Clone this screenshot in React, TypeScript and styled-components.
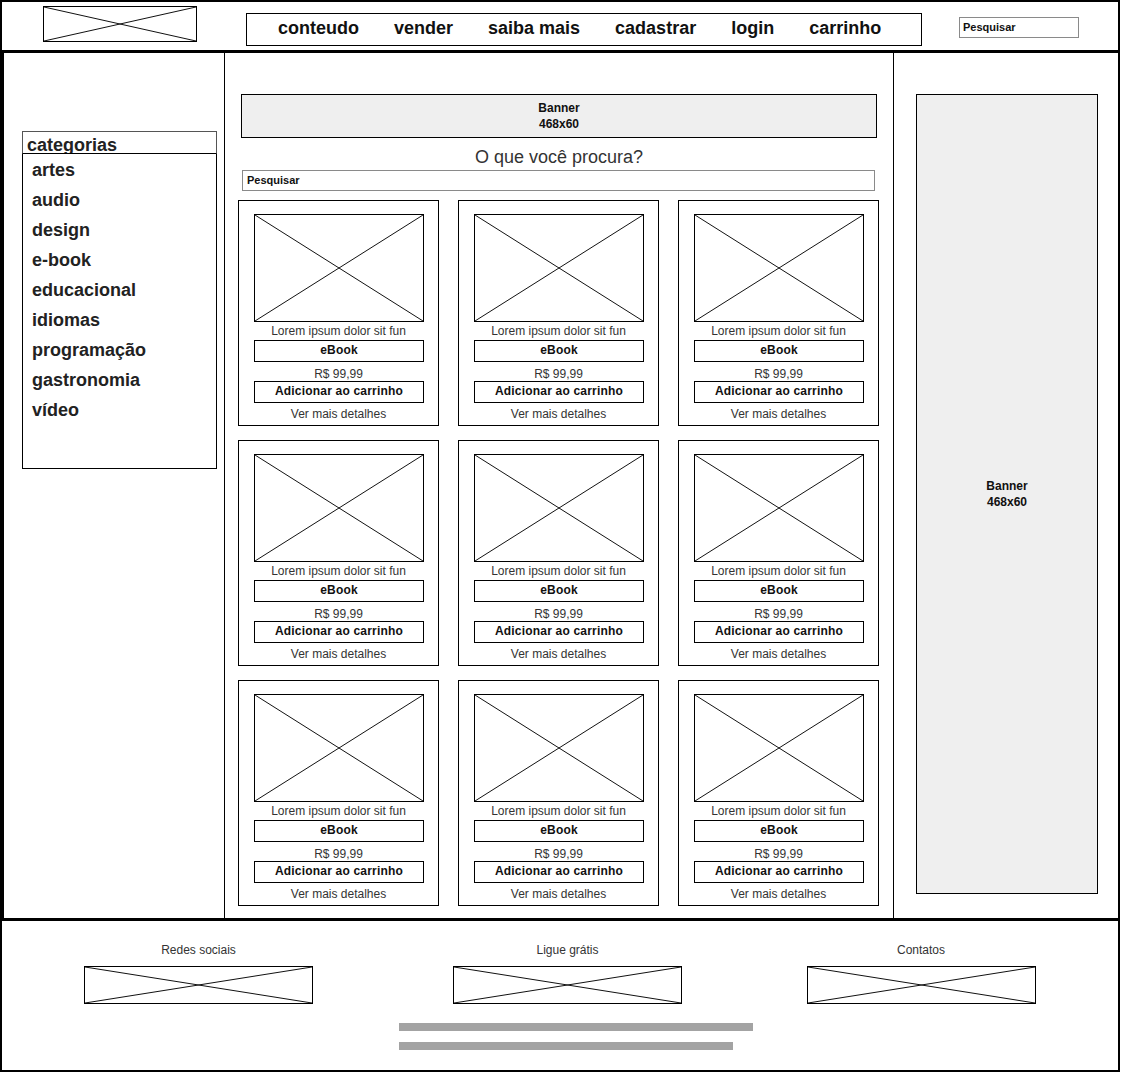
import React from 'react';
import styled, { createGlobalStyle } from 'styled-components';

const GlobalStyle = createGlobalStyle`
  html, body {
    margin: 0;
    padding: 0;
    background: #fff;
  }
  body {
    font-family: "Liberation Sans", Arial, sans-serif;
    color: #222;
  }
  * {
    box-sizing: border-box;
  }
`;

const navItems = ['conteudo', 'vender', 'saiba mais', 'cadastrar', 'login', 'carrinho'];
const categories = ['artes', 'audio', 'design', 'e-book', 'educacional', 'idiomas', 'programação', 'gastronomia', 'vídeo'];
const footerCols = ['Redes sociais', 'Ligue grátis', 'Contatos'];

const Frame = styled.div`
  width: 1120px;
  height: 1072px;
  border: 2px solid #000;
  display: flex;
  flex-direction: column;
`;

/* header */
const Header = styled.header`
  height: 51px;
  border-bottom: 3px solid #000;
  display: flex;
  align-items: flex-start;
  padding-left: 41px;
`;

const Placeholder = styled.div<{ $w: number; $h: number }>`
  width: ${(p) => p.$w}px;
  height: ${(p) => p.$h}px;
  border: 1px solid #000;
  background: #fff;
  flex: none;

  svg {
    display: block;
    width: 100%;
    height: 100%;
  }
`;

const LogoSlot = styled.div`
  margin-top: 4px;
`;

const Nav = styled.nav`
  margin: 11px 0 0 49px;
  width: 676px;
  height: 33px;
  border: 1px solid #000;
  display: flex;
  align-items: center;
  gap: 35px;
  padding: 0 0 3px 31px;
`;

const NavLink = styled.span`
  font-size: 18px;
  font-weight: bold;
  color: #111;
  white-space: nowrap;
`;

const SearchField = styled.div`
  height: 21px;
  border: 1px solid #8a8a8a;
  font-size: 11px;
  font-weight: bold;
  color: #111;
  line-height: 19px;
  padding-left: 4px;
`;

const HeaderSearch = styled(SearchField)`
  margin: 15px 0 0 37px;
  width: 120px;
  padding-left: 3px;
`;

/* main */
const Main = styled.main`
  height: 868px;
  border-bottom: 3px solid #000;
  display: grid;
  grid-template-columns: 223px 669px 1fr;
`;

const Sidebar = styled.aside`
  border-left: 2px solid #000;
  border-right: 1px solid #000;
  padding: 78px 0 0 18px;
`;

const CategoryHead = styled.div`
  width: 195px;
  height: 23px;
  border: 1px solid #555;
  border-bottom-color: #000;
  padding-left: 4px;
  font-size: 18px;
  font-weight: bold;
  line-height: 26px;
  color: #222;
  overflow: hidden;
`;

const CategoryList = styled.ul`
  width: 195px;
  height: 315px;
  margin: 0;
  list-style: none;
  border: 1px solid #000;
  border-top: none;
  padding: 1px 0 0 9px;
`;

const CategoryItem = styled.li`
  font-size: 18px;
  font-weight: bold;
  line-height: 30px;
  color: #222;
`;

const Content = styled.section`
  border-right: 1px solid #000;
  padding-top: 41px;
  display: flex;
  flex-direction: column;
`;

const BannerBox = styled.div`
  border: 1px solid #000;
  background: #efefef;
  display: flex;
  flex-direction: column;
  align-items: center;
  justify-content: center;
  font-size: 12px;
  font-weight: bold;
  line-height: 16px;
  color: #111;
`;

const TopBanner = styled(BannerBox)`
  margin: 0 16px;
  height: 44px;
`;

const Heading = styled.h2`
  margin: 8px 0 0;
  font-size: 18px;
  font-weight: normal;
  line-height: 22px;
  text-align: center;
  color: #333;
`;

const ContentSearch = styled(SearchField)`
  margin: 2px 18px 0 17px;
`;

const ProductGrid = styled.div`
  margin-top: 9px;
  padding: 0 13px;
  display: grid;
  grid-template-columns: repeat(3, 201px);
  column-gap: 19px;
  row-gap: 14px;
`;

const Card = styled.div`
  height: 226px;
  border: 1px solid #000;
  padding: 13px 15px 0;
  display: flex;
  flex-direction: column;
`;

const CardText = styled.div<{ $top: number }>`
  margin-top: ${(p) => p.$top}px;
  font-size: 12px;
  line-height: 14px;
  text-align: center;
  color: #333;
  white-space: nowrap;
`;

const LabelBox = styled.div<{ $top: number }>`
  margin-top: ${(p) => p.$top}px;
  width: 170px;
  height: 22px;
  border: 1px solid #000;
  font-size: 12px;
  font-weight: bold;
  line-height: 19px;
  text-align: center;
  color: #111;
  letter-spacing: 0.2px;
`;

const RightColumn = styled.aside`
  padding: 41px 0 0 22px;
`;

const SideBanner = styled(BannerBox)`
  width: 182px;
  height: 800px;
`;

/* footer */
const Footer = styled.footer`
  flex: 1;
  padding-top: 22px;
`;

const FooterColumns = styled.div`
  display: grid;
  grid-template-columns: 393px 345px 362px;
`;

const FooterCol = styled.div`
  display: flex;
  flex-direction: column;
  align-items: center;
  gap: 9px;
`;

const FooterTitle = styled.div`
  font-size: 12px;
  line-height: 14px;
  color: #333;
`;

const Bars = styled.div`
  margin-top: 19px;
  padding-left: 397px;
  display: flex;
  flex-direction: column;
  gap: 11px;
`;

const Bar = styled.div<{ $w: number }>`
  width: ${(p) => p.$w}px;
  height: 8px;
  background: #a3a3a3;
`;

function Cross() {
  return (
    <svg viewBox="0 0 100 100" preserveAspectRatio="none">
      <line x1="0" y1="0" x2="100" y2="100" stroke="#111" strokeWidth="1" vectorEffect="non-scaling-stroke" />
      <line x1="0" y1="100" x2="100" y2="0" stroke="#111" strokeWidth="1" vectorEffect="non-scaling-stroke" />
    </svg>
  );
}

function ProductCard() {
  return (
    <Card>
      <Placeholder $w={170} $h={108}>
        <Cross />
      </Placeholder>
      <CardText $top={2}>Lorem ipsum dolor sit fun</CardText>
      <LabelBox $top={2}>eBook</LabelBox>
      <CardText $top={5}>R$ 99,99</CardText>
      <LabelBox $top={0}>Adicionar ao carrinho</LabelBox>
      <CardText $top={4}>Ver mais detalhes</CardText>
    </Card>
  );
}

export default function App() {
  return (
    <>
      <GlobalStyle />
      <Frame>
        <Header>
          <LogoSlot>
            <Placeholder $w={154} $h={36}>
              <Cross />
            </Placeholder>
          </LogoSlot>
          <Nav>
            {navItems.map((item) => (
              <NavLink key={item}>{item}</NavLink>
            ))}
          </Nav>
          <HeaderSearch>Pesquisar</HeaderSearch>
        </Header>

        <Main>
          <Sidebar>
            <CategoryHead>categorias</CategoryHead>
            <CategoryList>
              {categories.map((c) => (
                <CategoryItem key={c}>{c}</CategoryItem>
              ))}
            </CategoryList>
          </Sidebar>

          <Content>
            <TopBanner>
              <span>Banner</span>
              <span>468x60</span>
            </TopBanner>
            <Heading>O que você procura?</Heading>
            <ContentSearch>Pesquisar</ContentSearch>
            <ProductGrid>
              {Array.from({ length: 9 }, (_, i) => (
                <ProductCard key={i} />
              ))}
            </ProductGrid>
          </Content>

          <RightColumn>
            <SideBanner>
              <span>Banner</span>
              <span>468x60</span>
            </SideBanner>
          </RightColumn>
        </Main>

        <Footer>
          <FooterColumns>
            {footerCols.map((title) => (
              <FooterCol key={title}>
                <FooterTitle>{title}</FooterTitle>
                <Placeholder $w={229} $h={38}>
                  <Cross />
                </Placeholder>
              </FooterCol>
            ))}
          </FooterColumns>
          <Bars>
            <Bar $w={354} />
            <Bar $w={334} />
          </Bars>
        </Footer>
      </Frame>
    </>
  );
}
